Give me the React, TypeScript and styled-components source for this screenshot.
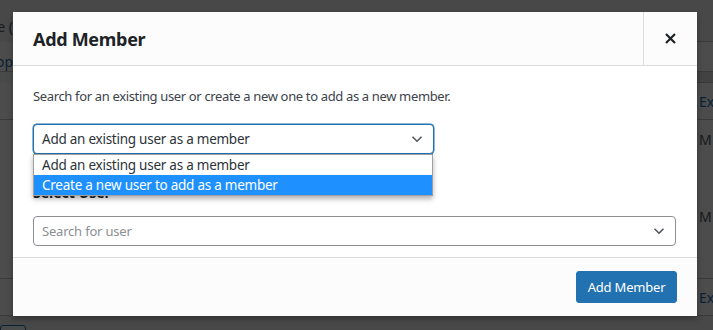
import { ReactElement } from 'react';
import styled, { createGlobalStyle } from 'styled-components';

const GlobalStyle = createGlobalStyle`
    html, body {
        margin: 0;
        padding: 0;
        width: 713px;
        height: 330px;
        overflow: hidden;
        background: #f0f0f1;
        font-family: 'Noto Sans', 'Open Sans', sans-serif;
        color: #1d2327;
    }
`;

// the admin page that sits behind the dimmed overlay
const Page = styled.div`
    position: relative;
    width: 713px;
    height: 330px;
    display: grid;
    grid-template-columns: 13px 1fr 16px;
    grid-template-rows: 42px 30px 11px 37px 159px 37px 14px;
    background: #f0f0f1;
`;

const Cell = styled.div<{ $bg?: string; $line?: boolean; $blue?: boolean }>`
    background: ${(p) => p.$bg ?? '#ffffff'};
    border-bottom: ${(p) => (p.$line ? '1px solid #c3c4c7' : 'none')};
    color: ${(p) => (p.$blue ? '#2271b1' : '#50575e')};
    font-size: 14px;
    overflow: hidden;
    white-space: nowrap;
    display: flex;
    align-items: center;
    padding-left: 2px;
`;

const LeftCell = styled(Cell)`
    justify-content: flex-end;
    padding-left: 0;
    padding-top: 10px;
`;

const StackCell = styled(Cell)`
    flex-direction: column;
    align-items: flex-start;
    justify-content: flex-start;
    gap: 58px;
    padding-top: 10px;
`;

const Stub = styled.div`
    grid-column: 1 / 2;
    margin-top: 9px;
    width: 24px;
    height: 10px;
    border: 1px solid #2271b1;
    border-radius: 3px;
    background: #f6f7f7;
`;

const Overlay = styled.div`
    position: absolute;
    inset: 0;
    background: rgba(0, 0, 0, 0.7);
`;

const Modal = styled.div`
    position: absolute;
    left: 13px;
    top: 12px;
    width: 684px;
    height: 304px;
    background: #ffffff;
    display: flex;
    flex-direction: column;
    box-shadow: 0 3px 6px rgba(0, 0, 0, 0.3);
`;

const Header = styled.div`
    display: flex;
    height: 53px;
    background: #fcfcfc;
    border-bottom: 1px solid #dcdcde;
`;

const Title = styled.h1`
    flex: 1;
    margin: 0;
    padding: 0 20px;
    display: flex;
    align-items: center;
    font-size: 18px;
    font-weight: 700;
    color: #1d2327;
    letter-spacing: -0.3px;
`;

const CloseButton = styled.button`
    width: 54px;
    border: none;
    border-left: 1px solid #dcdcde;
    background: transparent;
    display: flex;
    align-items: center;
    justify-content: center;
    padding: 0;
    color: #1d2327;
`;

const Body = styled.div`
    flex: 1;
    padding: 21px 20px 0;
    display: flex;
    flex-direction: column;
`;

const Intro = styled.p`
    margin: 0 0 19px;
    font-size: 13px;
    line-height: 18px;
    color: #3c434a;
    letter-spacing: -0.35px;
`;

const SelectWrap = styled.div`
    position: relative;
    width: 401px;
`;

const SelectBox = styled.div<{ $focus?: boolean; $wide?: boolean }>`
    box-sizing: border-box;
    height: 30px;
    width: ${(p) => (p.$wide ? '643px' : '401px')};
    border: 1px solid ${(p) => (p.$focus ? '#2271b1' : '#8c8f94')};
    box-shadow: ${(p) => (p.$focus ? '0 0 0 0.5px #2271b1' : 'none')};
    border-radius: 4px;
    background: #ffffff;
    display: flex;
    align-items: center;
    justify-content: space-between;
    padding: 0 10px 0 8px;
    font-size: 13.5px;
    letter-spacing: -0.25px;
    color: #2c3338;
`;

const Placeholder = styled.span`
    color: #8c8f94;
    font-size: 13px;
    letter-spacing: -0.2px;
`;

const OptionList = styled.ul`
    position: absolute;
    left: 0;
    top: 30px;
    width: 400px;
    margin: 0;
    padding: 0;
    list-style: none;
    background: #ffffff;
    border: 1px solid #a0a0a0;
    box-sizing: border-box;
    box-shadow: 0 3px 5px rgba(0, 0, 0, 0.3);
    z-index: 2;
`;

const Option = styled.li<{ $active?: boolean }>`
    height: 20px;
    line-height: 20px;
    padding-left: 8px;
    font-size: 13.5px;
    letter-spacing: -0.25px;
    background: ${(p) => (p.$active ? '#1e90ff' : '#ffffff')};
    color: ${(p) => (p.$active ? '#ffffff' : '#2c3338')};
`;

const Label = styled.div`
    margin-top: 31px;
    font-size: 14px;
    font-weight: 700;
    color: #1d2327;
    line-height: 16px;
`;

const Field = styled.div`
    margin-top: 15px;
`;

const Footer = styled.div`
    height: 58px;
    background: #fcfcfc;
    border-top: 1px solid #dcdcde;
    display: flex;
    align-items: center;
    justify-content: flex-end;
    padding: 0 20px;
`;

const PrimaryButton = styled.button`
    height: 32px;
    width: 101px;
    padding: 0;
    border: 1px solid #2271b1;
    border-radius: 3px;
    background: #2271b1;
    color: #ffffff;
    font-family: inherit;
    font-size: 13px;
    letter-spacing: -0.2px;
`;

const Chevron = (): ReactElement => (
    <svg width="12" height="8" viewBox="0 0 12 8" fill="none">
        <path d="M1.5 1.8 6 6.2l4.5-4.4" stroke="#50575e" strokeWidth="1.6" />
    </svg>
);

const CloseIcon = (): ReactElement => (
    <svg width="11" height="11" viewBox="0 0 11 11" fill="none">
        <path d="M1 1l9 9M10 1l-9 9" stroke="#1d2327" strokeWidth="2.2" />
    </svg>
);

export default function App(): ReactElement {
    return (
        <>
            <GlobalStyle />
            <Page>
                <LeftCell $bg="#f0f0f1">e (</LeftCell>
                <Cell $bg="#f0f0f1" />
                <Cell $bg="#f0f0f1" $line />
                <LeftCell $line $blue>pp</LeftCell>
                <Cell $line />
                <Cell $line />
                <Cell $bg="#f6f7f7" />
                <Cell $bg="#f6f7f7" />
                <Cell $bg="#dcdcde" $line />
                <Cell $line />
                <Cell $line />
                <Cell $line $blue>Ex</Cell>
                <Cell $line />
                <Cell $line />
                <StackCell $line>
                    <span>M</span>
                    <span>M</span>
                </StackCell>
                <Cell $line />
                <Cell $line />
                <Cell $line $blue>Ex</Cell>
                <Stub />
                <Overlay />
                <Modal>
                    <Header>
                        <Title>Add Member</Title>
                        <CloseButton aria-label="Close">
                            <CloseIcon />
                        </CloseButton>
                    </Header>
                    <Body>
                        <Intro>Search for an existing user or create a new one to add as a new member.</Intro>
                        <SelectWrap>
                            <SelectBox $focus>
                                <span>Add an existing user as a member</span>
                                <Chevron />
                            </SelectBox>
                            <OptionList>
                                <Option>Add an existing user as a member</Option>
                                <Option $active>Create a new user to add as a member</Option>
                            </OptionList>
                        </SelectWrap>
                        <Label>Select User</Label>
                        <Field>
                            <SelectBox $wide>
                                <Placeholder>Search for user</Placeholder>
                                <Chevron />
                            </SelectBox>
                        </Field>
                    </Body>
                    <Footer>
                        <PrimaryButton>Add Member</PrimaryButton>
                    </Footer>
                </Modal>
            </Page>
        </>
    );
}
